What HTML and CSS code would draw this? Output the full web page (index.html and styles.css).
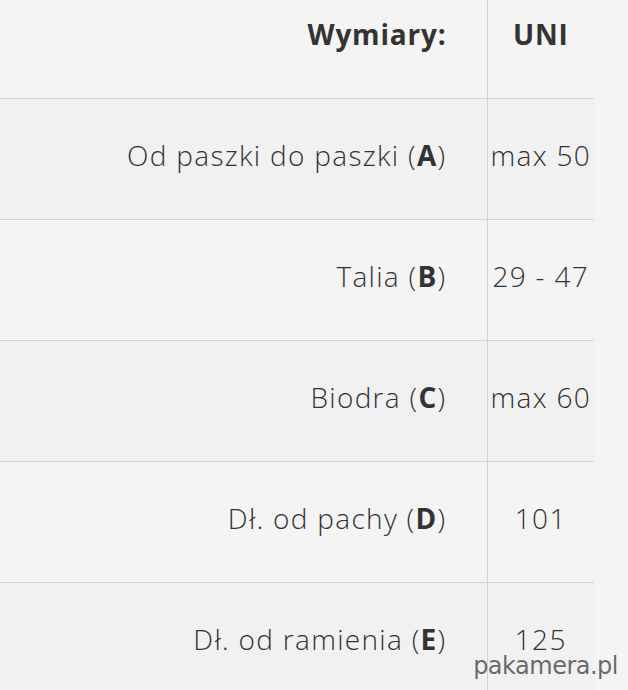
FILE: index.html
```html
<!DOCTYPE html>
<html lang="pl">
<head>
<meta charset="utf-8">
<link rel="stylesheet" href="styles.css">
</head>
<body>
<div class="page">
  <table class="sizes">
    <thead>
      <tr class="head">
        <th class="label">Wymiary:</th>
        <th class="value">UNI</th>
      </tr>
    </thead>
    <tbody>
      <tr class="odd"><td class="label">Od paszki do paszki (<b>A</b>)</td><td class="value">max 50</td></tr>
      <tr class="even"><td class="label">Talia (<b>B</b>)</td><td class="value">29 - 47</td></tr>
      <tr class="odd"><td class="label">Biodra (<b>C</b>)</td><td class="value">max 60</td></tr>
      <tr class="even"><td class="label">Dł. od pachy (<b>D</b>)</td><td class="value">101</td></tr>
      <tr class="odd"><td class="label">Dł. od ramienia (<b>E</b>)</td><td class="value">125</td></tr>
    </tbody>
  </table>
  <div class="watermark">pakamera.pl</div>
</div>
</body>
</html>
```
FILE: styles.css
```css
html, body {
  margin: 0;
  padding: 0;
  background: #f4f4f4;
}
.page {
  position: relative;
  width: 628px;
  height: 690px;
  overflow: hidden;
  font-family: "Open Sans", Lato, sans-serif;
  color: #333;
}
.sizes {
  border-collapse: collapse;
  width: 594px;
  table-layout: fixed;
}
.sizes th,
.sizes td {
  font-size: 28px;
  line-height: 38px;
  vertical-align: top;
  padding-bottom: 0;
}
.sizes .label {
  width: 487px;
  text-align: right;
  padding-left: 0;
  padding-right: 40px;
  box-sizing: border-box;
  border-right: 1px solid #d2d2d2;
}
.sizes .value {
  text-align: center;
  padding-left: 0;
  padding-right: 0;
}
.sizes th {
  font-weight: 700;
  height: 83px;
  padding-top: 15px;
  letter-spacing: 0.8px;
}
.sizes td {
  font-weight: 300;
  height: 83px;
  padding-top: 37px;
  border-top: 1px solid #d2d2d2;
  letter-spacing: 1.3px;
}
.sizes td b { font-weight: 700; }
.odd { background: #f1f1f1; }
.even { background: #f4f4f4; }
.watermark {
  position: absolute;
  right: 10px;
  bottom: 10px;
  font-family: "DejaVu Sans", sans-serif;
  font-size: 24px;
  font-weight: 400;
  color: rgba(80, 80, 80, 0.85);
  letter-spacing: -0.5px;
}
```
